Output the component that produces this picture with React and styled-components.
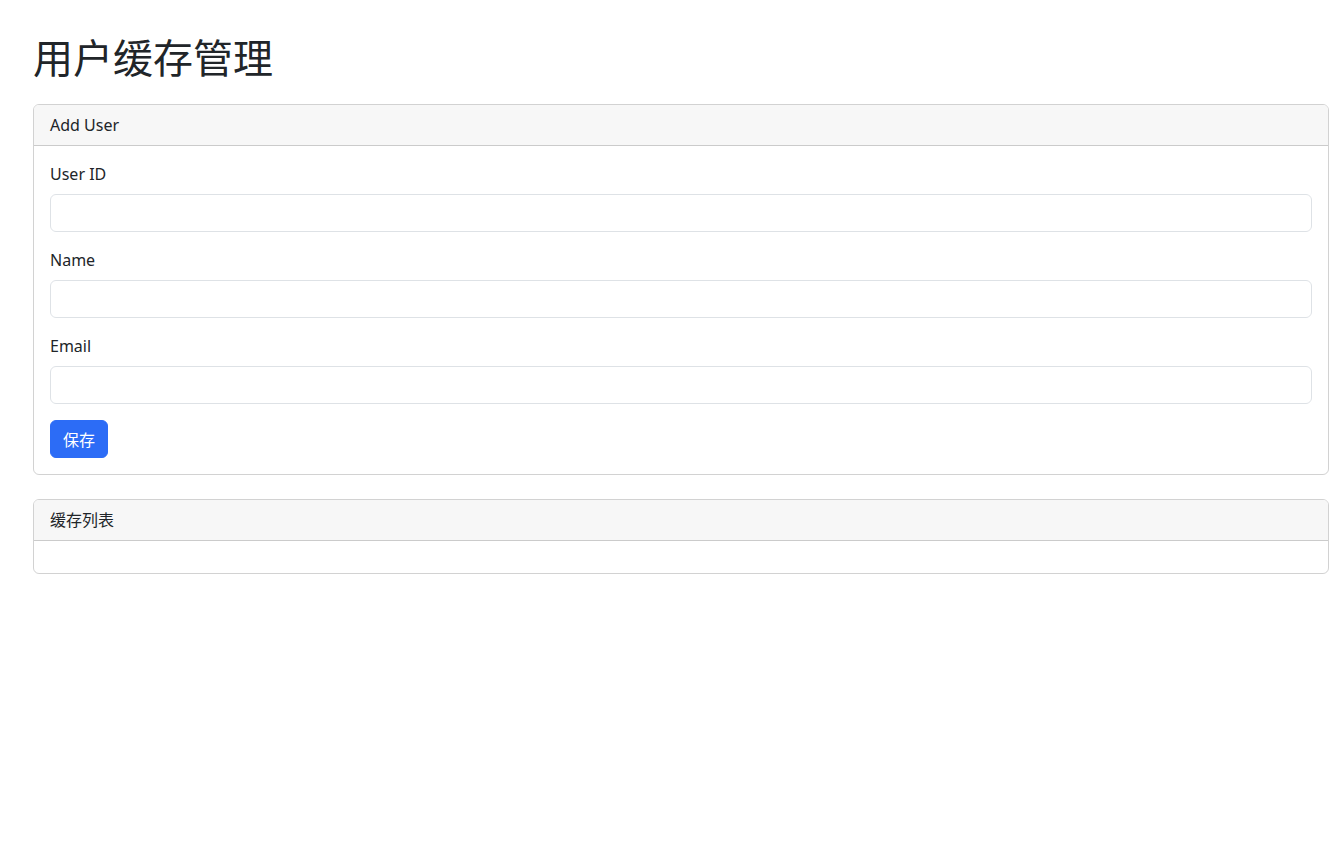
import React from "react";
import styled, { createGlobalStyle } from "styled-components";

const GlobalStyle = createGlobalStyle`
  * {
    box-sizing: border-box;
  }

  body {
    margin: 0;
    background: #fff;
    color: #212529;
    font-family: "Segoe UI", "Noto Sans", "Noto Sans CJK SC", sans-serif;
    font-size: 16px;
    line-height: 1.5;
  }
`;

const Page = styled.div`
  padding: 32px 4px 0 33px;
`;

const Title = styled.h1`
  margin: 0 0 24px;
  font-size: 40px;
  font-weight: 400;
  line-height: 1.2;
  font-family: "Noto Sans CJK SC", sans-serif;
`;

const Card = styled.div`
  border: 1px solid rgba(0, 0, 0, 0.175);
  border-radius: 6px;
  margin-bottom: 24px;
  overflow: hidden;
`;

const CardHeader = styled.div`
  padding: 8px 16px;
  background: #f7f7f7;
  border-bottom: 1px solid rgba(0, 0, 0, 0.175);
  font-size: ${(p) => p.size || 16}px;
  line-height: 24px;
`;

const CardBody = styled.div`
  padding: 16px;
`;

const Field = styled.div`
  margin-bottom: 16px;
`;

const Label = styled.label`
  display: block;
  margin-bottom: 8px;
  line-height: 24px;
`;

const Input = styled.input`
  display: block;
  width: 100%;
  height: 38px;
  padding: 6px 12px;
  border: 1px solid #dee2e6;
  border-radius: 6px;
  font: inherit;
  color: #212529;
  outline: none;
`;

const Button = styled.button`
  height: 38px;
  padding: 6px 12px;
  border: 1px solid #2c6cf6;
  border-radius: 6px;
  background: #2c6cf6;
  color: #fff;
  font-family: "Noto Sans CJK SC", sans-serif;
  font-size: 16px;
  line-height: 24px;
  cursor: pointer;
`;

const fields = ["User ID", "Name", "Email"];

export default function App() {
  return (
    <>
      <GlobalStyle />
      <Page>
        <Title>用户缓存管理</Title>
        <Card>
          <CardHeader>Add User</CardHeader>
          <CardBody>
            {fields.map((f) => (
              <Field key={f}>
                <Label>{f}</Label>
                <Input type="text" />
              </Field>
            ))}
            <Button>保存</Button>
          </CardBody>
        </Card>
        <Card>
          <CardHeader>缓存列表</CardHeader>
          <CardBody />
        </Card>
      </Page>
    </>
  );
}
